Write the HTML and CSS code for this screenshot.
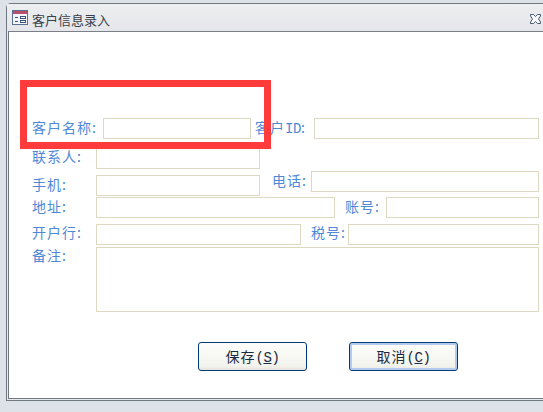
FILE: index.html
```html
<!DOCTYPE html>
<html lang="zh-CN">
<head>
  <meta charset="UTF-8">
  <title>客户信息录入</title>
  <link rel="stylesheet" href="styles.css">
</head>
<body>
  <div class="window">
    <div class="titlebar">
      <svg class="form-icon" width="16" height="15" viewBox="0 0 16 15">
        <rect x="0.5" y="0.5" width="15" height="14" fill="#f4f6fa" stroke="#5a6f95"/>
        <rect x="1" y="1" width="14" height="3" fill="#b8506a"/>
        <path d="M3 7.500h3M3 11.500h3" stroke="#39507a" fill="none"/>
        <rect x="8.500" y="6.500" width="5" height="2" fill="#fff" stroke="#39507a"/>
        <rect x="8.500" y="10.500" width="5" height="2" fill="#fff" stroke="#39507a"/>
      </svg>
      <span class="title">客户信息录入</span>
      <svg class="close" width="11" height="10" viewBox="0 0 11 10">
        <path d="M0.500 0.500h3L5.500 2.500l2-2h3v1.500L8.500 5l2 3v1.500h-3l-2-2-2 2h-3V8l2-3-2-3z" fill="#f6f7f9" stroke="#4d5a70"/>
      </svg>
    </div>
    <div class="content">
      <div class="row row-name">
        <label class="w71">客户名称:</label>
        <input class="w148" type="text">
        <label class="ml4 w59">客户<span class="latin">ID</span>:</label>
        <input class="grow" type="text">
      </div>
      <div class="row row-contact">
        <label class="w64 up1">联系人:</label>
        <input class="w164" type="text">
      </div>
      <div class="row row-phone">
        <label class="w64 down4">手机:</label>
        <input class="w164 down4" type="text">
        <label class="ml12 w39">电话:</label>
        <input class="grow" type="text">
      </div>
      <div class="row row-addr">
        <label class="w64">地址:</label>
        <input class="w239" type="text">
        <label class="ml10 w41">账号:</label>
        <input class="grow" type="text">
      </div>
      <div class="row row-bank">
        <label class="w64 up1">开户行:</label>
        <input class="w205" type="text">
        <label class="ml10 w37 up1">税号:</label>
        <input class="grow" type="text">
      </div>
      <div class="row row-note">
        <label class="w64 up1">备注:</label>
        <textarea class="grow note"></textarea>
      </div>
      <div class="buttons">
        <button type="button">保存<span class="latin">(<u>S</u>)</span></button>
        <button type="button" class="focused">取消<span class="latin">(<u>C</u>)</span></button>
      </div>
    </div>
  </div>
  <div class="marker"></div>
</body>
</html>
```

FILE: styles.css
```css
html, body {
  margin: 0;
  height: 412px;
  overflow: hidden;
}
body {
  background: #dde1e8;
  font-family: "Noto Sans CJK SC", "Liberation Sans", sans-serif;
  padding: 3px 0 0 6px;
  box-sizing: border-box;
  position: relative;
}
.window {
  height: 398px;
  box-sizing: border-box;
  border: 1px solid #6f7780;
  border-right: none;
  border-radius: 5px 0 0 0;
  background: #e8eaed;
  padding-bottom: 1px;
  display: flex;
  flex-direction: column;
}
.titlebar {
  height: 27px;
  flex: none;
  display: flex;
  align-items: center;
  padding: 0 2px 0 5px;
  box-sizing: border-box;
  background: linear-gradient(#eceef0, #e4e6e9);
}
.form-icon {
  flex: none;
}
.title {
  margin-left: 4px;
  margin-top: 4px;
  font-size: 13px;
  color: #3a3f4a;
}
.close {
  margin-left: auto;
  margin-top: 2px;
}
.content {
  flex: 1;
  background: #fff;
  margin-left: 1px;
  border-top: 1px solid #7b8088;
  border-left: 1px solid #6f7780;
  border-bottom: 1px solid #6f7780;
  padding: 86px 4px 0 23px;
}
.row {
  display: flex;
  align-items: flex-start;
}
.row-contact { margin-top: 9px; }
.row-phone { margin-top: 2px; }
.row-addr { margin-top: 1px; }
.row-bank { margin-top: 6px; }
.row-note { margin-top: 2px; }
label {
  flex: none;
  height: 21px;
  font-size: 14px;
  line-height: 19px;
  letter-spacing: 1px;
  color: #4f88d6;
  white-space: nowrap;
}
.latin {
  font-family: "Liberation Mono", monospace;
  font-size: 14px;
  line-height: 1;
  letter-spacing: -0.4px;
}
input, textarea {
  display: block;
  margin: 0;
  padding: 0;
  height: 21px;
  box-sizing: border-box;
  border: 1px solid #ddd8c2;
  background: #fff;
  outline: none;
  resize: none;
}
.grow { flex: 1; min-width: 0; }
.note { height: 65px; }
.w37 { width: 37px; }
.w39 { width: 39px; }
.w41 { width: 41px; }
.w59 { width: 59px; }
.w64 { width: 64px; }
.w71 { width: 71px; }
.w148 { width: 148px; }
.w164 { width: 164px; }
.w205 { width: 205px; }
.w239 { width: 239px; }
.ml4 { margin-left: 4px; }
.ml10 { margin-left: 10px; }
.ml12 { margin-left: 12px; }
.up1 { margin-top: -1px; }
.down4 { margin-top: 4px; }
.buttons {
  display: flex;
  gap: 42px;
  margin-top: 30px;
  padding-left: 166px;
}
button {
  width: 109px;
  height: 29px;
  padding: 0 0 2px;
  border: 1px solid #003c74;
  border-radius: 3px;
  background: linear-gradient(#fdfdfb, #f3f3ee 85%, #e6e4da);
  font-family: inherit;
  font-size: 14px;
  letter-spacing: 1px;
  color: #1c2a40;
}
.focused {
  box-shadow: inset 0 0 0 2px #b3cbf0;
}
.marker {
  position: absolute;
  left: 20px;
  top: 80px;
  width: 251px;
  height: 69px;
  box-sizing: border-box;
  border: 7px solid #ff3b3b;
}
```
